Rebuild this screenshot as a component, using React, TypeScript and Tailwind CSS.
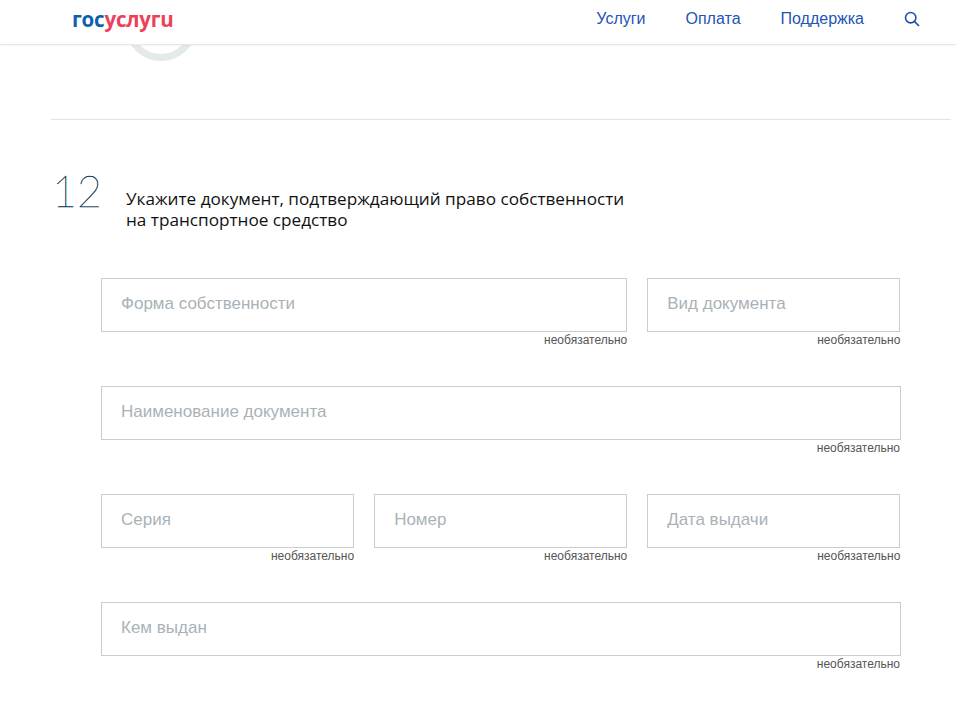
const NAV_LINKS = ['Услуги', 'Оплата', 'Поддержка'];

type FieldT = { label: string; span?: string; full?: boolean };

const FIELDS: FieldT[] = [
  { label: 'Форма собственности', span: 'col-span-2' },
  { label: 'Вид документа' },
  { label: 'Наименование документа', span: 'col-span-3 w-[800px]', full: true },
  { label: 'Серия' },
  { label: 'Номер' },
  { label: 'Дата выдачи' },
  { label: 'Кем выдан', span: 'col-span-3 w-[800px]', full: true },
];

function Field({ label, span, full }: FieldT) {
  return (
    <div className={span}>
      <div className="flex h-[54px] items-center border border-[#cccccc] pb-[2px] pl-[19px] text-[17px] text-[#a9b2b8]">{label}</div>
      <p className={full ? 'h-4 pr-px text-right text-[12px] leading-4 text-[#555555]' : 'h-4 text-right text-[12px] leading-4 text-[#555555]'}>необязательно</p>
    </div>
  );
}

function Header() {
  return (
    <header className="relative z-10 flex h-[45px] items-center justify-between border-b border-[#e8e8e8] bg-white pr-[36px] pb-[6px] pl-[72px] shadow-[0_1px_2px_rgba(0,0,0,0.04)]">
      <div className="font-['Open_Sans',sans-serif] text-[20.5px] leading-none font-bold tracking-[-0.2px]">
        <span className="text-[#0b62ac]">гос</span>
        <span className="text-[#ee3f58]">услугu</span>
      </div>
      <nav className="flex items-center text-[16px] text-[#2455b5]">
        {NAV_LINKS.map(link => (
          <a key={link} className="mr-10 last:mr-[41px]">
            {link}
          </a>
        ))}
        <svg width="16" height="16" viewBox="0 0 16 16" fill="none" stroke="#1d4fa8" strokeWidth="1.6">
          <circle cx="6.7" cy="6.7" r="5.2" />
          <path d="M10.4 10.4 15 15" />
        </svg>
      </nav>
    </header>
  );
}

export default function App() {
  return (
    <div className="h-[714px] overflow-hidden bg-white font-['Liberation_Sans',sans-serif]">
      <Header />
      <main className="pl-[51px]">
        <div className="-mt-[45px] ml-[74px]">
          <svg width="72" height="61" viewBox="0 0 72 61" fill="none" className="block">
            <circle cx="36" cy="25" r="32.5" stroke="#e4e9e9" strokeWidth="7" />
          </svg>
        </div>
        <div className="mt-[58px] w-[900px] border-t border-[#e3e3e3]" />
        <section className="mt-[51px]">
          <div className="flex">
            <span className="-mt-[3px] w-[75px] pl-[1px] font-['Lato',sans-serif] text-[43px] leading-[46px] font-thin text-[#00304f] [-webkit-text-stroke:0.35px_#00304f]">12</span>
            <h2 className="mt-[17px] w-[510px] font-['Open_Sans',sans-serif] text-[17.17px] leading-[21px] text-[#111111]">
              Укажите документ, подтверждающий право собственности на транспортное средство
            </h2>
          </div>
          <div className="mt-[48px] ml-[50px] grid w-[799.4px] grid-cols-3 gap-x-5 gap-y-[38px]">
            {FIELDS.map(field => (
              <Field key={field.label} {...field} />
            ))}
          </div>
        </section>
      </main>
    </div>
  );
}
